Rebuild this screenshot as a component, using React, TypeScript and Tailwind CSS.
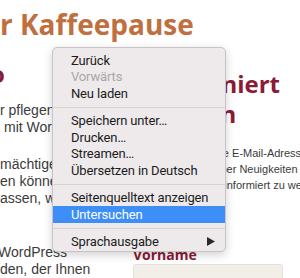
import React from 'react';

type Item = { label: string; disabled?: boolean; active?: boolean; submenu?: boolean };

const groups: Item[][] = [
  [{ label: 'Zurück' }, { label: 'Vorwärts', disabled: true }, { label: 'Neu laden' }],
  [{ label: 'Speichern unter…' }, { label: 'Drucken…' }, { label: 'Streamen…' }, { label: 'Übersetzen in Deutsch' }],
  [{ label: 'Seitenquelltext anzeigen' }, { label: 'Untersuchen', active: true }],
  [{ label: 'Sprachausgabe', submenu: true }],
];

function ContextMenu() {
  return (
    <div className="absolute left-[52px] top-[47px] w-[174px] rounded-[5px] border border-[#c8c4c5] bg-[#eeeaeb] pt-[4px] pb-[1px] shadow-[0_3px_10px_rgba(0,0,0,0.18)] font-['Roboto',sans-serif] text-[13px] tracking-[-0.15px]">
      {groups.map((group, gi) => (
        <div key={gi}>
          {gi > 0 && (
            <div className="flex h-[11px] items-center">
              <div className="h-px w-full bg-[#d6d2d3]" />
            </div>
          )}
          {group.map((item) => (
            <div
              key={item.label}
              className={
                item.active
                  ? 'flex h-[16.5px] items-center justify-between bg-[#3d8ef7] pl-[18px] pr-[10px] text-white'
                  : item.disabled
                    ? 'flex h-[16.5px] items-center justify-between pl-[18px] pr-[10px] text-[#a8a6a7]'
                    : 'flex h-[16.5px] items-center justify-between pl-[18px] pr-[10px] text-[#1c1c1c]'
              }
            >
              <span>{item.label}</span>
              {item.submenu && (
                <svg width="8" height="9" viewBox="0 0 8 9" className="text-[#2a2a2a]">
                  <path d="M0 0 L8 4.5 L0 9 Z" fill="currentColor" />
                </svg>
              )}
            </div>
          ))}
        </div>
      ))}
    </div>
  );
}

export default function App() {
  return (
    <div className="relative h-[278px] w-[300px] overflow-hidden bg-white">
      <h1 className="whitespace-nowrap pt-[6px] font-['Open_Sans',sans-serif] text-[28px] font-bold leading-[36px] text-[#c06f3e]">
        r Kaffeepause
      </h1>

      <div className="flex">
        <div className="w-[133px] shrink-0 font-['Liberation_Sans',Arial,sans-serif] text-[14px] leading-[17px] text-[#3b3b3b]">
          <h2 className="-ml-[10px] mt-[17px] font-['Open_Sans',sans-serif] text-[24px] font-bold leading-[30px] text-[#8b1a36]">
            o
          </h2>
          <p className="mt-[13px] whitespace-nowrap">
            <span className="block">r pflegen Sie</span>
            <span className="block pl-[4px]">mit WordPress</span>
          </p>
          <p className="mt-[20px] whitespace-nowrap">
            <span className="block">mächtigen</span>
            <span className="block">en können Sie</span>
            <span className="block">assen, wie</span>
          </p>
          <p className="mt-[37px] whitespace-nowrap">
            <span className="-ml-[2px] block">WordPress</span>
            <span className="block">den, der Ihnen</span>
          </p>
        </div>

        <div className="w-[167px] shrink-0">
          <h2 className="mt-[27px] whitespace-nowrap font-['Open_Sans',sans-serif] text-[24px] font-bold leading-[30px] text-[#8b1a36]">
            <span className="block pl-[26px]">Abonniert</span>
            <span className="block pl-[14px]">bleiben</span>
          </h2>
          <p className="mt-[16px] whitespace-nowrap font-['Liberation_Sans',Arial,sans-serif] text-[11px] leading-[16px] text-[#3b3b3b]">
            <span className="block pl-[22px]">Geben Sie Ihre E-Mail-Adresse ein,</span>
            <span className="block pl-[63px]">um über Neuigkeiten im Blog</span>
            <span className="block pl-[65px]">stets informiert zu werden.</span>
          </p>
          <label className="mt-[53px] block font-['Open_Sans',sans-serif] text-[14px] font-bold leading-[18px] text-[#8b1a36]">
            Vorname
          </label>
          <div className="h-[30px] w-[150px] rounded-[3px] border border-[#e6e0d8] bg-[#f2eee8]" />
        </div>
      </div>

      <ContextMenu />
    </div>
  );
}
